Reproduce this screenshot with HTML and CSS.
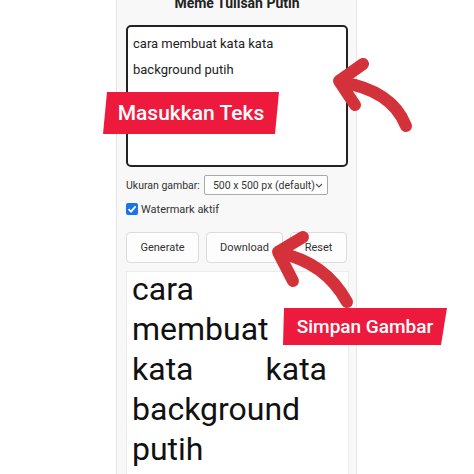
FILE: index.html
```html
<!DOCTYPE html>
<html lang="id">
<head>
<meta charset="utf-8">
<title>Meme Tulisan Putih</title>
<link rel="stylesheet" href="styles.css">
</head>
<body>
<div class="stage">
  <div class="panel">
    <h1 class="title">Meme Tulisan Putih</h1>
    <div class="textarea">cara membuat kata kata background putih</div>
    <div class="row size-row">
      <span class="label">Ukuran gambar:</span>
      <div class="select">
        <span>500 x 500 px (default)</span>
        <svg class="chev" width="8" height="5" viewBox="0 0 8 5"><path d="M1 1 L4 4 L7 1" fill="none" stroke="#555" stroke-width="1.1"/></svg>
      </div>
    </div>
    <div class="row check-row">
      <span class="checkbox"><svg width="12" height="12" viewBox="0 0 12 12"><path d="M2.6 6.2 L5 8.6 L9.6 3.4" fill="none" stroke="#fff" stroke-width="1.8"/></svg></span>
      <span class="label">Watermark aktif</span>
    </div>
    <div class="buttons">
      <div class="btn btn-gen">Generate</div>
      <div class="btn btn-dl">Download</div>
      <div class="btn btn-reset">Reset</div>
    </div>
    <div class="output"><div class="output-text">cara membuat kata kata background putih</div></div>
  </div>

  <svg class="arrows" width="474" height="474" viewBox="0 0 474 474">
    <g fill="none" stroke="#d3323b" stroke-width="12" stroke-linecap="round" stroke-linejoin="round">
      <path d="M406 126 Q392 90 340 82"/>
      <path d="M363 64 L339 81 L355 105"/>
      <path d="M347 302 Q325 262 279 253"/>
      <path d="M303 237 L278 252 L293 281"/>
    </g>
  </svg>

  <div class="tag tag-input">Masukkan Teks</div>
  <div class="tag tag-save">Simpan Gambar</div>
</div>
</body>
</html>
```

FILE: styles.css
```css
html, body {
  margin: 0;
  padding: 0;
  background: #ffffff;
}

.stage {
  position: relative;
  width: 474px;
  height: 474px;
  overflow: hidden;
  font-family: Roboto, "Noto Sans", sans-serif;
  color: #222;
}

.panel {
  margin-top: -7px;
  margin-left: 116px;
  width: 241px;
  height: 520px;
  background: #f8f8f8;
  border: 1px solid #e6e6e6;
  padding: 0 0 0 9px;
  box-sizing: border-box;
  display: flex;
  flex-direction: column;
}

.title {
  margin: 0;
  font-size: 14px;
  line-height: 18px;
  font-weight: 700;
  text-align: center;
  width: 222px;
  color: #222;
}

.textarea {
  margin-top: 13px;
  width: 222px;
  height: 142px;
  box-sizing: border-box;
  border: 2px solid #222;
  border-radius: 5px;
  background: #fff;
  padding: 4px 30px 0 5px;
  font-size: 13px;
  line-height: 26px;
  color: #222;
}

.row {
  display: flex;
  align-items: center;
}

.size-row {
  margin-top: 8px;
  height: 20px;
  gap: 4px;
}

.label {
  font-size: 10.5px;
  color: #333;
  white-space: nowrap;
}

.select {
  flex: 0 0 124px;
  width: 124px;
  height: 20px;
  box-sizing: border-box;
  border: 1px solid #a9a9a9;
  border-radius: 2px;
  background: #fff;
  display: flex;
  align-items: center;
  justify-content: space-between;
  padding: 0 5px 0 8px;
  font-size: 10.5px;
  color: #333;
  white-space: nowrap;
}

.chev {
  display: block;
  flex: none;
}

.check-row {
  margin-top: 8px;
  height: 12px;
  gap: 3px;
}

.check-row .label {
  font-size: 11px;
}

.checkbox {
  width: 12px;
  height: 12px;
  border-radius: 2px;
  background: #1a73e8;
  display: block;
}

.checkbox svg {
  display: block;
}

.buttons {
  margin-top: 17px;
  display: flex;
  gap: 7px;
}

.btn {
  height: 31px;
  box-sizing: border-box;
  border: 1px solid #dcdcdc;
  border-radius: 4px;
  background: #fdfdfd;
  font-size: 11px;
  color: #333;
  display: flex;
  align-items: center;
  justify-content: center;
}

.btn-gen { width: 73px; }
.btn-dl { width: 77px; }
.btn-reset { width: 57px; }

.output {
  margin-top: 8px;
  width: 223px;
  flex: 1;
  box-sizing: border-box;
  border: 1px solid #ececec;
  background: #fff;
  padding: 0 21px 0 5px;
}

.output-text {
  margin-top: -3px;
  font-size: 32px;
  line-height: 40px;
  text-align: justify;
  color: #111;
}

.arrows {
  position: absolute;
  left: 0;
  top: 0;
}

.tag {
  position: absolute;
  background: #ee1a3d;
  color: #fff;
  display: flex;
  align-items: center;
  justify-content: center;
  font-family: Roboto, "Noto Sans", sans-serif;
  font-weight: 500;
}

.tag-input {
  left: 103px;
  top: 92px;
  width: 176px;
  height: 42px;
  font-size: 21px;
  clip-path: polygon(4px 0, 176px 0, 172px 42px, 0 42px);
}

.tag-save {
  left: 283px;
  top: 308px;
  width: 164px;
  height: 37px;
  font-size: 19px;
  clip-path: polygon(1px 0, 164px 0, 158px 37px, 0 37px);
}
```
